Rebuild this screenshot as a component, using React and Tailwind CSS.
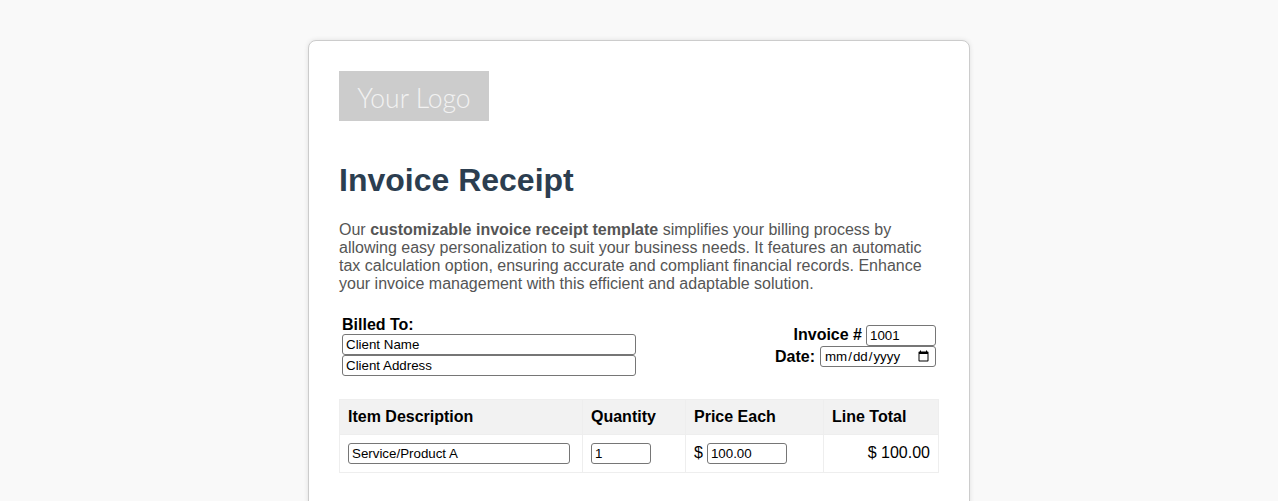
const sans = { fontFamily: '"Liberation Sans", Arial, sans-serif' };

const fieldCls =
  "block h-[21px] rounded-[3px] border border-[#767676] bg-white px-[3px] text-[13.33px] leading-[15px] font-normal text-black outline-none";

export default function App() {
  return (
    <div className="h-screen overflow-hidden bg-[#f9f9f9] pt-10 text-black" style={sans}>
      <div className="mx-auto w-[662px] min-h-[700px] rounded-lg border border-[#ccc] bg-white p-[30px] shadow-[0_0_5px_rgba(0,0,0,0.1)]">
        {/* logo placeholder */}
        <div className="flex h-[50px] w-[150px] items-center justify-center bg-[#ccc] pt-1.5 font-['Lato',sans-serif] text-[26.5px] font-light text-[#f2f2f2]">
          Your Logo
        </div>

        <h1 className="mt-[41px] text-[32px] leading-[37px] font-bold text-[#2c3e50]">Invoice Receipt</h1>

        <p className="mt-[22px] text-base leading-[18px] text-[#555]">
          Our <strong className="font-bold">customizable invoice receipt template</strong> simplifies your billing
          process by allowing easy personalization to suit your business needs. It features an automatic tax
          calculation option, ensuring accurate and compliant financial records. Enhance your invoice management
          with this efficient and adaptable solution.
        </p>

        <div className="mt-[23px] flex items-center justify-between px-[3px]">
          <div className="w-[294px]">
            <div className="text-base leading-[18px] font-bold">Billed To:</div>
            <input className={`${fieldCls} w-full`} defaultValue="Client Name" />
            <input className={`${fieldCls} w-full`} defaultValue="Client Address" />
          </div>
          <div className="text-right text-base leading-[18px] font-bold">
            <div className="flex items-center justify-end gap-1">
              <span className="-mt-0.5">Invoice #</span>
              <input className={`${fieldCls} w-[70px]`} defaultValue="1001" />
            </div>
            <div className="flex items-center justify-end gap-[5px]">
              <span>Date:</span>
              <input type="date" className={`${fieldCls} w-[116px]`} />
            </div>
          </div>
        </div>

        <table className="mt-[23px] w-[600px] table-fixed border-collapse text-base">
          <thead>
            <tr className="h-[35px] bg-[#f2f2f2] text-left font-bold">
              <th className="w-[243px] border border-[#eee] px-2">Item Description</th>
              <th className="w-[103px] border border-[#eee] px-2">Quantity</th>
              <th className="w-[138px] border border-[#eee] px-2">Price Each</th>
              <th className="border border-[#eee] px-2">Line Total</th>
            </tr>
          </thead>
          <tbody>
            <tr className="h-[38px]">
              <td className="border border-[#eee] px-2">
                <input className={`${fieldCls} w-[222px]`} defaultValue="Service/Product A" />
              </td>
              <td className="border border-[#eee] px-2">
                <input className={`${fieldCls} w-[60px]`} defaultValue="1" />
              </td>
              <td className="border border-[#eee] px-2">
                <div className="flex items-center gap-1">
                  <span className="-mt-0.5">$</span>
                  <input className={`${fieldCls} w-20`} defaultValue="100.00" />
                </div>
              </td>
              <td className="border border-[#eee] px-2 pb-0.5 text-right">$ 100.00</td>
            </tr>
          </tbody>
        </table>
      </div>
    </div>
  );
}
